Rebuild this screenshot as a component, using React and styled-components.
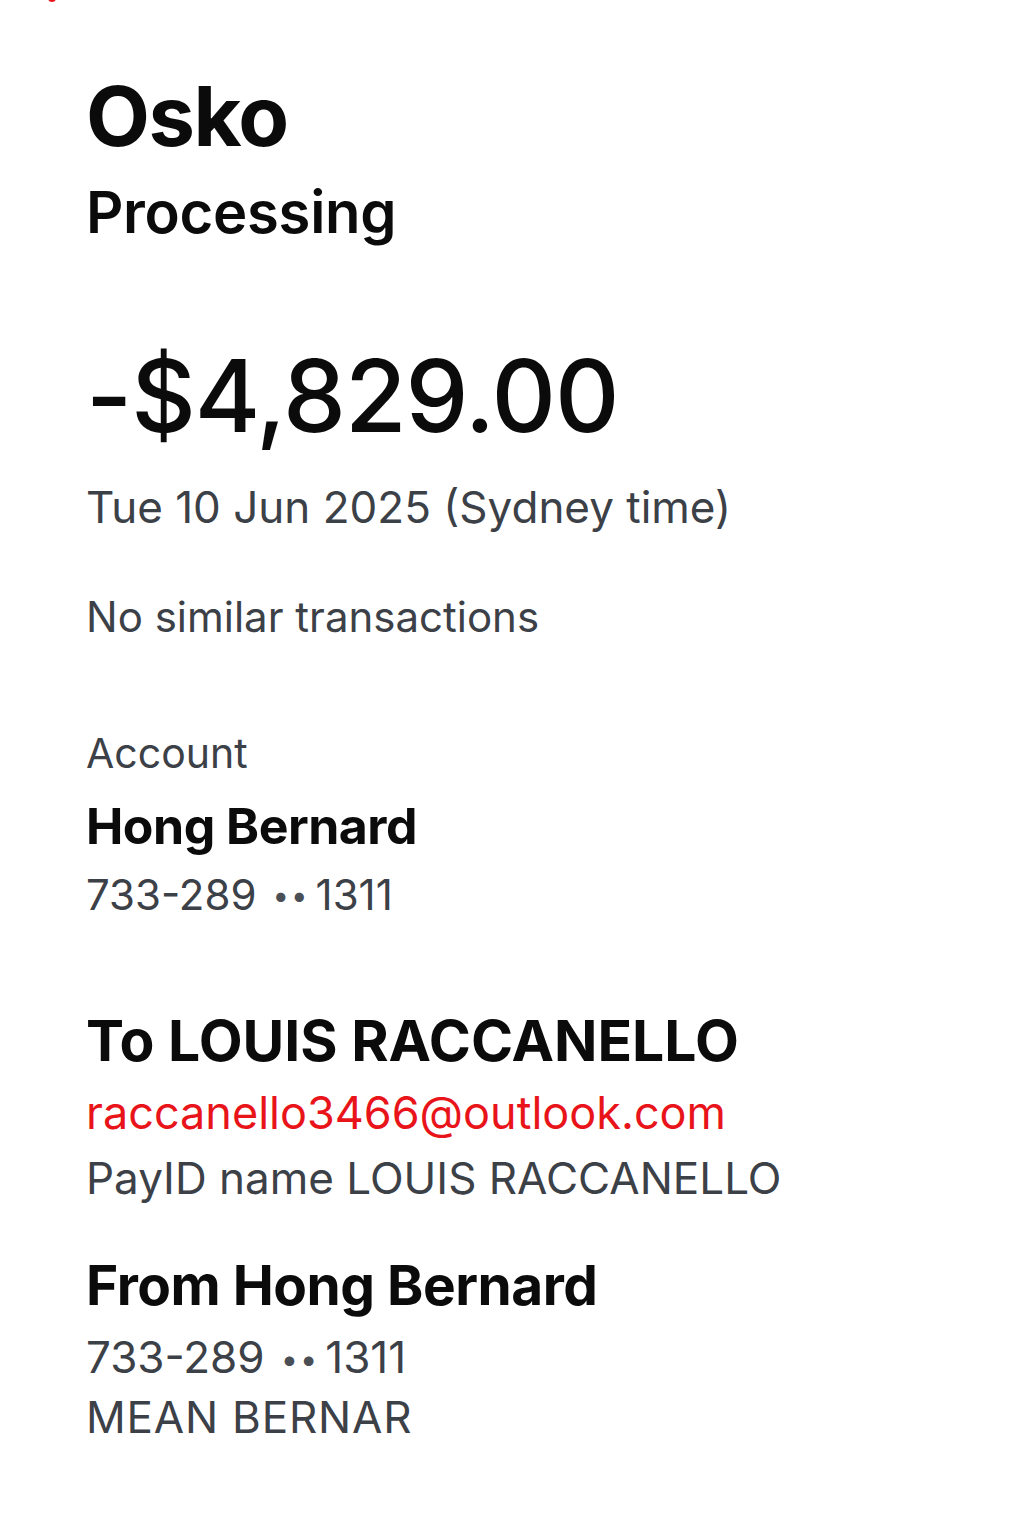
import styled, { createGlobalStyle } from 'styled-components';

const GlobalStyle = createGlobalStyle`
  html, body {
    margin: 0;
    padding: 0;
    background: #ffffff;
  }
  body {
    font-family: Inter, "Noto Sans", "Liberation Sans", sans-serif;
    -webkit-font-smoothing: antialiased;
  }
`;

const Page = styled.main`
  position: relative;
  min-height: 1536px;
  padding: 68px 86px 0;
  box-sizing: border-box;
  display: flex;
  flex-direction: column;
  color: #0b0b0c;
`;

const EdgeDot = styled.span`
  position: absolute;
  top: -6px;
  left: 48px;
  width: 8px;
  height: 8px;
  border-radius: 50%;
  background: #e8141a;
`;

const Title = styled.h1`
  margin: 0;
  font-size: 83px;
  font-weight: 700;
  line-height: 96px;
  letter-spacing: -1.5px;
`;

const Status = styled.h2`
  margin: 13px 0 0;
  font-size: 58px;
  font-weight: 600;
  line-height: 70px;
  letter-spacing: -0.3px;
`;

const Amount = styled.div`
  margin-top: 91px;
  font-size: 100px;
  font-weight: 500;
  line-height: 116px;
  letter-spacing: -1px;
`;

const Line = styled.div`
  font-size: ${(p) => p.$size || 42}px;
  font-weight: 400;
  line-height: ${(p) => p.$lh || 56}px;
  letter-spacing: ${(p) => p.$track || 0}px;
  color: ${(p) => (p.$accent ? '#e8141a' : '#3c4047')};
  margin-top: ${(p) => p.$gap || 0}px;
`;

const Heading = styled.div`
  font-size: ${(p) => p.$size || 55}px;
  font-weight: 700;
  line-height: ${(p) => p.$lh || 66}px;
  margin-top: ${(p) => p.$gap || 0}px;
  letter-spacing: ${(p) => p.$track ?? -0.5}px;
`;

const Section = styled.section`
  display: flex;
  flex-direction: column;
  margin-top: ${(p) => p.$gap || 0}px;
`;

const Dots = styled.span`
  font-size: 0.7em;
  letter-spacing: 2px;
  margin: 0 6px 0 16px;
  vertical-align: 0.12em;
  color: #4a4e55;
`;

const AccountNumber = ({ bsb, last, ...rest }) => (
  <Line {...rest}>
    {bsb}
    <Dots>••</Dots>
    {last}
  </Line>
);

export default function App() {
  return (
    <>
      <GlobalStyle />
      <Page>
        <EdgeDot />
        <Title>Osko</Title>
        <Status>Processing</Status>

        <Amount>-$4,829.00</Amount>
        <Line $size={44} $gap={25}>Tue 10 Jun 2025 (Sydney time)</Line>
        <Line $gap={54}>No similar transactions</Line>

        <Section $gap={80}>
          <Line $size={41}>Account</Line>
          <Heading $size={50} $gap={12}>Hong Bernard</Heading>
          <AccountNumber bsb="733-289" last="1311" $gap={8} />
        </Section>

        <Section $gap={84}>
          <Heading $size={57} $track={0}>To LOUIS RACCANELLO</Heading>
          <Line $accent $size={45} $gap={11}>raccanello3466@outlook.com</Line>
          <Line $size={44} $gap={9}>PayID name LOUIS RACCANELLO</Line>
        </Section>

        <Section $gap={46}>
          <Heading>From Hong Bernard</Heading>
          <AccountNumber bsb="733-289" last="1311" $size={44} $gap={11} />
          <Line $size={44} $track={0.8} $gap={2}>MEAN BERNAR</Line>
        </Section>
      </Page>
    </>
  );
}
